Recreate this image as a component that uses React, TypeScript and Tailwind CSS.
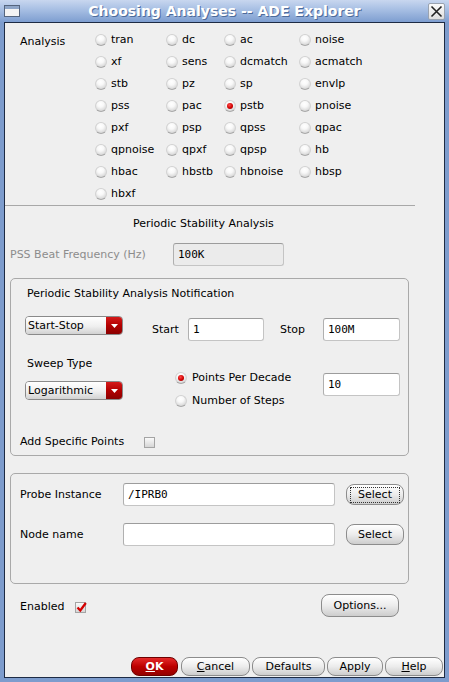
import React from "react";

const ROWS = [
  ["tran", "dc", "ac", "noise"],
  ["xf", "sens", "dcmatch", "acmatch"],
  ["stb", "pz", "sp", "envlp"],
  ["pss", "pac", "pstb", "pnoise"],
  ["pxf", "psp", "qpss", "qpac"],
  ["qpnoise", "qpxf", "qpsp", "hb"],
  ["hbac", "hbstb", "hbnoise", "hbsp"],
  ["hbxf"],
];

function Radio({ checked = false }: { checked?: boolean }) {
  return (
    <span className="flex h-[12px] w-[12px] shrink-0 items-center justify-center rounded-full border border-[#d2d2d2] border-b-[#a8a8a8] bg-[radial-gradient(circle_at_45%_30%,#ffffff_0%,#f8f8f8_35%,#c6c6c6_100%)]">
      {checked && (
        <span className="h-[6px] w-[6px] rounded-full bg-[radial-gradient(circle_at_40%_35%,#ff4a4a_0%,#d00000_55%,#8c0000_100%)]" />
      )}
    </span>
  );
}

function Check({ checked = false }: { checked?: boolean }) {
  return (
    <span className="relative flex h-[11px] w-[11px] shrink-0 border border-[#a4a4a4] bg-[linear-gradient(#fafafa,#d6d6d6)]">
      {checked && (
        <svg className="absolute left-[0px] top-[-1px]" width="11" height="11" viewBox="0 0 11 11">
          <path d="M1.5 5.5 L4.3 8.5 L9.8 1" fill="none" stroke="#d40000" strokeWidth="2.3" />
        </svg>
      )}
    </span>
  );
}

function Field({
  value = "",
  className = "",
  disabled = false,
}: {
  value?: string;
  className?: string;
  disabled?: boolean;
}) {
  return (
    <div
      className={`flex h-[23px] shrink-0 items-center rounded-[3px] border border-[#c4c4c4] border-l-[#b0b0b0] border-t-[#9c9c9c] pl-[4px] font-['DejaVu_Sans_Mono',monospace] text-[11px] text-black ${
        disabled ? "bg-[#ebebeb]" : "bg-white"
      } ${className}`}
    >
      {value}
    </div>
  );
}

function Btn({
  children,
  className = "",
  focused = false,
}: {
  children: React.ReactNode;
  className?: string;
  focused?: boolean;
}) {
  return (
    <div
      className={`flex shrink-0 items-center justify-center rounded-[8px] border border-[#8c8c8c] bg-[linear-gradient(#ffffff,#ececec_50%,#cdcdcd)] text-[11px] text-black ${className}`}
    >
      {focused ? (
        <span className="border border-dotted border-[#333] px-[7px] leading-[14px]">
          {children}
        </span>
      ) : (
        children
      )}
    </div>
  );
}

function Dropdown({ label }: { label: string }) {
  return (
    <div className="flex h-[19px] w-[98px] shrink-0 overflow-hidden rounded-[4px] border border-[#8a8a8a]">
      <div className="flex flex-1 items-center bg-[linear-gradient(#ffffff,#efefef_55%,#d2d2d2)] pl-[2px]">
        {label}
      </div>
      <div className="flex w-[16px] items-center justify-center bg-[linear-gradient(#d41a1a,#b30000_50%,#8a0000)]">
        <svg width="7" height="4" viewBox="0 0 7 4">
          <path d="M0 0 H7 L3.5 4 Z" fill="#ffffff" />
        </svg>
      </div>
    </div>
  );
}

export default function App() {
  return (
    <div className="flex h-[682px] w-[449px] flex-col bg-[#7d9ccd] font-['DejaVu_Sans',sans-serif]">
      {/* title bar */}
      <div className="grid h-[22px] shrink-0 grid-cols-[24px_1fr_24px] items-center bg-[linear-gradient(#c8d7ef,#a6bee3_45%,#7e9ed0)]">
        <div className="ml-[4px] flex h-[12px] w-[16px] flex-col border border-[#55657e] bg-[#f4f4f4]">
          <div className="h-[3px] bg-[#8fa6c8]" />
        </div>
        <div className="text-center text-[14px] font-bold leading-[18px] text-white [text-shadow:1px_1px_0_#4d6b9b]">
          Choosing Analyses -- ADE Explorer
        </div>
        <div className="ml-[3px] flex h-[17px] w-[17px] items-center justify-center rounded-[2px] border border-[#9aa3b0] bg-[linear-gradient(#fbfbfb,#dedede)]">
          <svg width="13" height="13" viewBox="0 0 13 13">
            <path d="M1.5 1.5 L11.5 11.5 M11.5 1.5 L1.5 11.5" stroke="#222" strokeWidth="1.6" />
          </svg>
        </div>
      </div>

      {/* body */}
      <div className="mx-[4px] flex h-[656px] flex-col border border-[#1d2b44] bg-[#efefef] text-[11px] leading-[14px] text-black">
        {/* analysis choices */}
        <div className="flex pt-[6px]">
          <div className="w-[90px] shrink-0 pl-[15px] pt-[6px]">Analysis</div>
          <div className="grid grid-cols-[71px_58px_75px_80px]">
            {ROWS.flat().map((name) => (
              <div key={name} className="flex h-[22px] items-center gap-[4px]">
                <Radio checked={name === "pstb"} />
                <span>{name}</span>
              </div>
            ))}
          </div>
        </div>
        <div className="h-px w-[410px] bg-[#a8a8a8]" />

        <div className="mt-[11px] pl-[128px]">Periodic Stability Analysis</div>

        <div className="mt-[12px] flex h-[23px] items-center">
          <div className="w-[168px] pl-[5px] text-[#8c8c8c]">PSS Beat Frequency (Hz)</div>
          <Field value="100K" disabled className="w-[111px]" />
        </div>

        {/* sweep group */}
        <div className="ml-[5px] mt-[12px] h-[178px] w-[399px] rounded-[5px] border border-[#a9a9a9]">
          <div className="mt-[8px] pl-[16px]">Periodic Stability Analysis Notification</div>

          <div className="mt-[15px] flex items-start pl-[14px]">
            <Dropdown label="Start-Stop" />
            <div className="ml-[29px] mt-[2px] flex h-[23px] items-center">
              <span className="w-[36px]">Start</span>
              <Field value="1" className="w-[76px]" />
              <span className="ml-[16px] w-[43px] pt-[1px]">Stop</span>
              <Field value="100M" className="w-[77px]" />
            </div>
          </div>

          <div className="mt-[16px] flex items-start pl-[14px]">
            <div className="w-[98px] shrink-0">
              <div className="pl-[2px]">Sweep Type</div>
              <div className="mt-[10px]">
                <Dropdown label="Logarithmic" />
              </div>
            </div>
            <div className="ml-[52px] mt-[9px] w-[148px] shrink-0">
              <div className="flex h-[23px] items-center gap-[5px]">
                <Radio checked />
                <span>Points Per Decade</span>
              </div>
              <div className="flex h-[23px] items-center gap-[5px]">
                <Radio />
                <span>Number of Steps</span>
              </div>
            </div>
            <Field value="10" className="mt-[16px] w-[77px]" />
          </div>

          <div className="mt-[23px] flex h-[14px] items-center pl-[9px]">
            <span className="w-[124px]">Add Specific Points</span>
            <Check />
          </div>
        </div>

        {/* probe group */}
        <div className="ml-[5px] mt-[17px] h-[111px] w-[399px] rounded-[5px] border border-[#a9a9a9]">
          <div className="mt-[9px] flex h-[23px] items-center">
            <span className="w-[112px] pl-[9px]">Probe Instance</span>
            <Field value="/IPRB0" className="w-[212px]" />
            <Btn focused className="ml-[11px] h-[21px] w-[58px]">
              Select
            </Btn>
          </div>
          <div className="mt-[17px] flex h-[23px] items-center">
            <span className="w-[112px] pl-[9px]">Node name</span>
            <Field className="w-[212px]" />
            <Btn className="ml-[11px] h-[21px] w-[58px]">Select</Btn>
          </div>
        </div>

        <div className="mt-[10px] flex h-[23px] w-[394px] items-center justify-between">
          <div className="mt-[3px] flex items-center">
            <span className="w-[70px] pl-[15px]">Enabled</span>
            <Check checked />
          </div>
          <Btn className="h-[23px] w-[78px]">Options...</Btn>
        </div>

        {/* dialog buttons */}
        <div className="mt-[40px] flex h-[19px] justify-end gap-[2px] pr-[1px]">
          <div className="mr-[1px] flex w-[47px] items-center justify-center rounded-[8px] border border-[#6e0000] bg-[linear-gradient(#e42a2a,#bd0000_50%,#940000)] font-bold text-white">
            <span className="underline">O</span>K
          </div>
          <Btn className="h-[19px] w-[69px]">
            <span className="underline">C</span>ancel
          </Btn>
          <Btn className="h-[19px] w-[73px]">Defaults</Btn>
          <Btn className="h-[19px] w-[56px]">Apply</Btn>
          <Btn className="h-[19px] w-[58px]">
            <span className="underline">H</span>elp
          </Btn>
        </div>
      </div>
    </div>
  );
}
